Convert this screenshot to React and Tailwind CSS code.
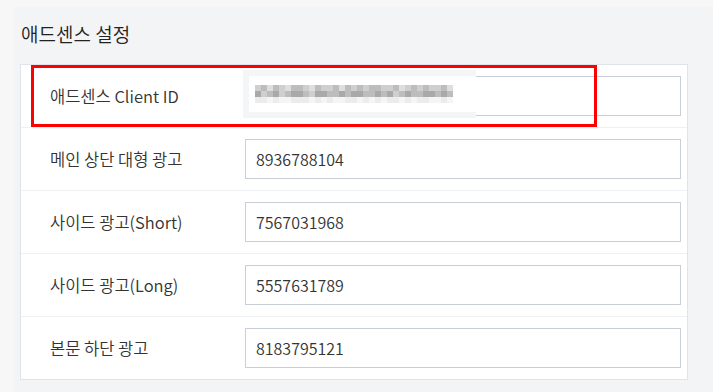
import { useState } from 'react';

const FONT = { fontFamily: '"Noto Sans CJK KR", "Noto Sans", sans-serif' };

// pixel shades for the mosaic that hides the client id
const MOSAIC = [
  'cbdbcdbbcdbccbdbcbcbbccbdcbcbccbd',
  'acbacbaabcaabbabaabbabacbabbaabab',
  'eefeffeeefefeffeefefefeefefeeffef',
];
const SHADE = { a: '#a9a9a9', b: '#bdbdbd', c: '#cfcfcf', d: '#dedede', e: '#ececec', f: '#f5f5f5' };

const Mosaic = () => (
  <svg width="204" height="18" viewBox="0 0 204 18" className="block">
    {MOSAIC.map((row, r) =>
      row.split('').map((ch, c) => (
        <rect key={`${r}-${c}`} x={c * 6} y={r * 6} width="6" height="6" fill={SHADE[ch]} />
      ))
    )}
  </svg>
);

const AdsenseSettings = () => {
  const [fields, setFields] = useState([
    { id: 'client', label: '애드센스 Client ID', value: '' },
    { id: 'main', label: '메인 상단 대형 광고', value: '8936788104' },
    { id: 'short', label: '사이드 광고(Short)', value: '7567031968' },
    { id: 'long', label: '사이드 광고(Long)', value: '5557631789' },
    { id: 'bottom', label: '본문 하단 광고', value: '8183795121' },
  ]);

  const handleChange = (id, value) => {
    setFields(prev => prev.map(f => (f.id === id ? { ...f, value } : f)));
  };

  return (
    <div className="w-[713px] h-[392px] bg-[#f7f7f7] pt-[7px] pl-[14px] overflow-hidden" style={FONT}>
      <div className="h-full bg-[#f3f4f6] pl-[6px] pr-[25px] pt-[13px]">
        {/* Title */}
        <h2 className="pl-[1px] text-[19px] leading-[28px] font-[350] text-[#222]">애드센스 설정</h2>

        {/* Settings card */}
        <div className="mt-[16px] bg-white border border-[#dfe4ec]">
          {fields.map((field, i) => (
            <div
              key={field.id}
              className={`relative flex items-center ${i > 0 ? 'h-[63px] border-t border-[#eef0f3]' : 'h-[62px]'}`}
            >
              <div className="w-[224px] pl-[29px] text-[16.5px] font-[350] text-[#333]">{field.label}</div>
              <input
                type="text"
                value={field.value}
                onChange={(e) => handleChange(field.id, e.target.value)}
                className="w-[436px] h-[40px] border border-[#c8cfd8] px-[10px] text-[16px] font-[350] text-[#333] outline-none"
                style={FONT}
              />

              {field.id === 'client' && (
                <>
                  {/* redacted id */}
                  <div className="absolute left-[222px] top-[5px] w-[233px] h-[48px] bg-[#f4f5f6] pt-[6px] pl-[6px] pb-[6px]">
                    <div className="h-full bg-white flex items-center pl-[6px]">
                      <Mosaic />
                    </div>
                  </div>
                  {/* highlight box */}
                  <div className="absolute left-[10px] top-0 w-[566px] h-[62px] border-[3px] border-[#ff0000]" />
                </>
              )}
            </div>
          ))}
        </div>
      </div>
    </div>
  );
};

export default function App() {
  return <AdsenseSettings />;
}
